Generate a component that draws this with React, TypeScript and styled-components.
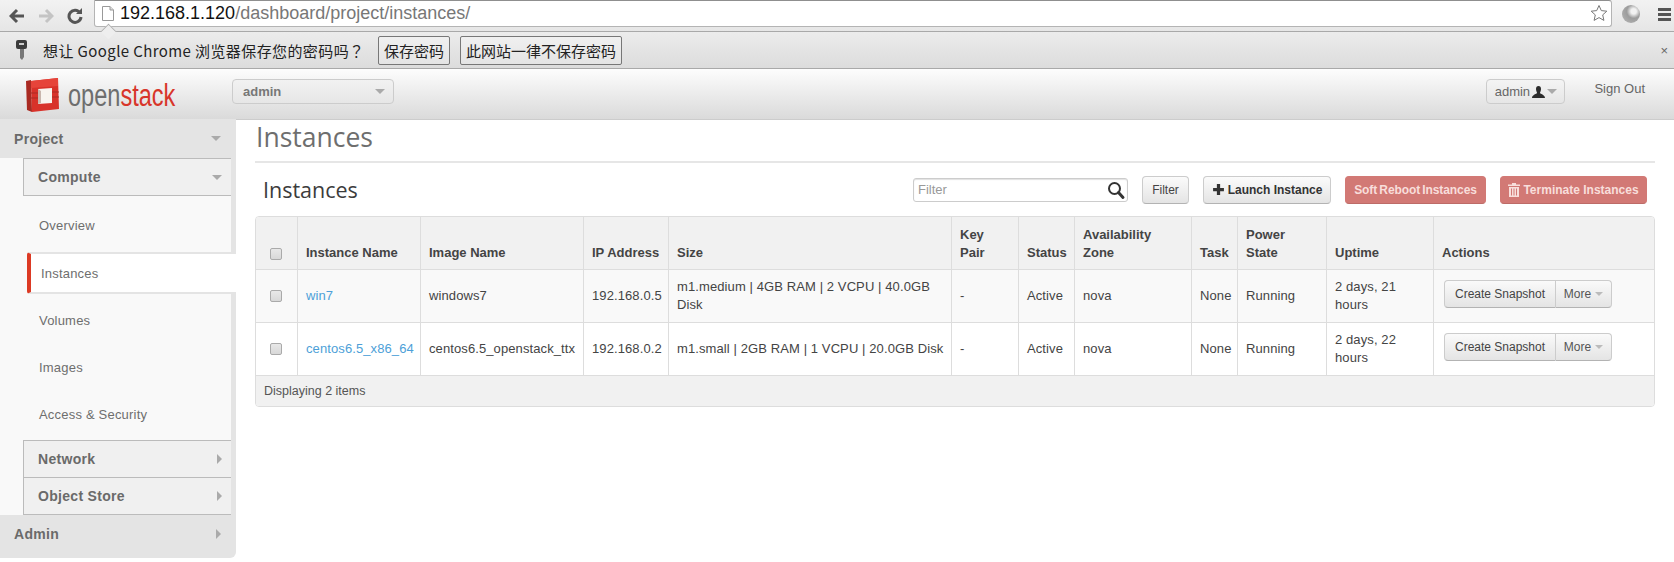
import { createGlobalStyle, styled } from "styled-components";

const GlobalStyle = createGlobalStyle`
  html, body {
    margin: 0;
    padding: 0;
    background: #fff;
    overflow: hidden;
  }
  * { box-sizing: border-box; }
  body {
    font-family: "Liberation Sans", Arial, sans-serif;
    font-size: 13px;
    color: #333;
  }
`;

const Page = styled.div`
  width: 1674px;
  height: 562px;
  display: flex;
  flex-direction: column;
  overflow: hidden;
`;

/* browser chrome */
const Toolbar = styled.div`
  height: 32px;
  flex: none;
  display: flex;
  align-items: center;
  padding-right: 3px;
  background: linear-gradient(#f2f2f2, #e6e6e6);
  border-bottom: 1px solid #a9a9a9;
`;

const NavIcon = styled.svg<{ $gap: number }>`
  width: 16px;
  height: 16px;
  flex: none;
  margin-left: ${(p) => p.$gap}px;
`;

const Omnibox = styled.div`
  margin-left: 11px;
  flex: 1;
  height: 27px;
  margin-top: -5px;
  background: #fff;
  border: 1px solid #b4b4b4;
  border-top-color: #8f8f8f;
  border-radius: 0 3px 3px 3px;
  display: flex;
  align-items: center;
  padding: 0 3px 0 7px;
  font-size: 18px;
  color: #777;
  b {
    font-weight: normal;
    color: #111;
  }
`;

const PageIcon = styled.svg`
  width: 12px;
  height: 15px;
  margin-right: 6px;
  flex: none;
`;

const UrlText = styled.span`
  flex: 1;
`;

const Globe = styled.div`
  width: 18px;
  height: 18px;
  margin-left: 10px;
  margin-top: -3px;
  border-radius: 50%;
  background: radial-gradient(circle at 65% 35%, #f2f2f2 0 16%, #9c9c9c 42%, #b8b8b8 100%);
  flex: none;
`;

const Hamburger = styled.div`
  width: 13px;
  height: 13px;
  margin-left: 18px;
  margin-top: -3px;
  flex: none;
  background: repeating-linear-gradient(#555 0 3px, transparent 3px 5px);
`;

const InfoBar = styled.div`
  height: 37px;
  flex: none;
  display: flex;
  align-items: center;
  padding: 0 6px 0 15px;
  background: linear-gradient(#ececec, #dcdcdc);
  border-bottom: 1px solid #a9a9a9;
  font-family: "Noto Sans CJK SC", "Liberation Sans", sans-serif;
  font-size: 15px;
  color: #222;
  position: relative;

  &::before {
    content: "";
    position: absolute;
    left: 102px;
    top: -7px;
    width: 12px;
    height: 12px;
    background: #eee;
    border-left: 1px solid #a9a9a9;
    border-top: 1px solid #a9a9a9;
    transform: rotate(45deg) scale(0.85);
  }
`;

const KeyIcon = styled.svg`
  width: 13px;
  height: 20px;
  flex: none;
  margin-right: 15px;
`;

const InfoText = styled.span`
  width: 335px;
  flex: none;
  font-family: "Noto Sans CJK TC", "Noto Sans CJK SC", "Liberation Sans", sans-serif;
  letter-spacing: 0.4px;
  white-space: nowrap;
`;

const InfoButton = styled.button`
  height: 29px;
  padding: 0 5px;
  margin-right: 10px;
  font: inherit;
  color: #222;
  background: linear-gradient(#f0f0f0, #e4e4e4);
  border: 1px solid #777;
  border-radius: 2px;
`;

const CloseMark = styled.span`
  margin-left: auto;
  font-family: "Liberation Sans", sans-serif;
  font-size: 13px;
  color: #666;
`;

/* dashboard header */
const Header = styled.header`
  height: 51px;
  flex: none;
  display: flex;
  background: linear-gradient(#fdfdfd, #dadada);
  border-bottom: 1px solid #ccc;
`;

const Brand = styled.div`
  width: 232px;
  display: flex;
  align-items: center;
  padding: 3px 0 0 26px;
`;

const Wordmark = styled.div`
  font-family: "Liberation Sans", sans-serif;
  font-size: 31px;
  white-space: nowrap;
  transform: scaleX(0.76);
  transform-origin: left center;
  span { color: #6e6e6e; }
  em { font-style: normal; color: #d8352a; }
`;

const LogoMark = styled.svg`
  width: 33px;
  height: 35px;
  margin-right: 9px;
  flex: none;
`;

const TenantSelect = styled.div`
  width: 162px;
  height: 25px;
  margin-top: 10px;
  display: flex;
  align-items: center;
  justify-content: space-between;
  padding: 0 8px 0 10px;
  border: 1px solid #ccc;
  border-radius: 4px;
  background: linear-gradient(#f2f2f2, #e6e6e6);
  font-size: 13px;
  font-weight: bold;
  color: #777;
`;

const Caret = styled.i<{ $size?: number; $color?: string }>`
  display: inline-block;
  width: 0;
  height: 0;
  border-left: ${(p) => p.$size ?? 5}px solid transparent;
  border-right: ${(p) => p.$size ?? 5}px solid transparent;
  border-top: ${(p) => p.$size ?? 5}px solid ${(p) => p.$color ?? "#aaa"};
`;

const SideCaret = styled.i`
  display: inline-block;
  width: 0;
  height: 0;
  border-top: 5px solid transparent;
  border-bottom: 5px solid transparent;
  border-left: 5px solid #aaa;
`;

const HeaderRight = styled.div`
  margin-left: auto;
  display: flex;
  align-items: flex-start;
  padding-right: 29px;
`;

const UserButton = styled.div`
  width: 79px;
  height: 25px;
  margin-top: 10px;
  display: flex;
  align-items: center;
  justify-content: center;
  gap: 2px;
  border: 1px solid #ccc;
  border-radius: 4px;
  background: linear-gradient(#f4f4f4, #e6e6e6);
  color: #666;
  font-size: 13px;
`;

const SignOut = styled.a`
  margin: 12px 0 0 29px;
  font-size: 13px;
  color: #666;
`;

/* body */
const Body = styled.div`
  flex: 1;
  display: flex;
  min-height: 0;
`;

const Sidebar = styled.nav`
  width: 236px;
  height: 439px;
  flex: none;
  background: #e4e4e4;
  border-radius: 0 0 6px 0;
  display: flex;
  flex-direction: column;
  margin-top: -1px;
`;

const PanelHead = styled.div<{ $h: number; $pb?: number }>`
  height: ${(p) => p.$h}px;
  flex: none;
  display: flex;
  align-items: center;
  justify-content: space-between;
  padding: 0 15px ${(p) => p.$pb ?? 0}px 14px;
  font-size: 14px;
  letter-spacing: 0.3px;
  font-weight: bold;
  color: #6a6a6a;
`;

const SidePanel = styled.div`
  flex: 1;
  width: 231px;
  background: #f9f9f9;
  padding-left: 23px;
  display: flex;
  flex-direction: column;
`;

const DashHead = styled.div<{ $h: number; $top?: boolean }>`
  height: ${(p) => p.$h}px;
  flex: none;
  display: flex;
  align-items: center;
  justify-content: space-between;
  padding: 0 9px 0 14px;
  font-size: 14px;
  letter-spacing: 0.3px;
  font-weight: bold;
  color: #6a6a6a;
  background: #f0f0f0;
  border-left: 1px solid #bbb;
  border-top: ${(p) => (p.$top ? "1px solid #bbb" : "0")};
  border-bottom: 1px solid #bbb;
`;

const NavLink = styled.div<{ $h: number; $pt?: number }>`
  height: ${(p) => p.$h}px;
  flex: none;
  display: flex;
  align-items: center;
  padding: ${(p) => p.$pt ?? 0}px 0 0 16px;
  font-size: 13px;
  letter-spacing: 0.2px;
  color: #6e6e6e;
`;

const ActiveLink = styled.div`
  height: 42px;
  width: 209px;
  flex: none;
  margin-left: 4px;
  display: flex;
  align-items: center;
  padding-left: 10px;
  font-size: 13px;
  letter-spacing: 0.2px;
  color: #6e6e6e;
  background: #fff;
  border-left: 4px solid #dc3a24;
  border-top: 2px solid #e4e4e4;
  border-bottom: 2px solid #e4e4e4;
  border-radius: 3px 0 0 3px;
`;

const Main = styled.main`
  flex: 1;
  min-width: 0;
  padding: 0 19px;
`;

const Title = styled.div`
  height: 43px;
  padding-left: 1px;
  border-bottom: 2px solid #e6e6e6;
  font-family: "Open Sans", "Liberation Sans", sans-serif;
  font-size: 26.5px;
  line-height: 34px;
  color: #6e6e6e;
`;

const TableBar = styled.div`
  height: 53px;
  display: flex;
  align-items: center;
  padding: 0 8px;
`;

const TableTitle = styled.div`
  font-family: "Open Sans", "Liberation Sans", sans-serif;
  font-size: 21.5px;
  color: #3c3c3c;
  margin: -1px auto 0 0;
`;

const FilterBox = styled.div`
  width: 215px;
  height: 24px;
  display: flex;
  align-items: center;
  justify-content: space-between;
  padding: 0 1px 0 4px;
  border: 1px solid #ccc;
  border-radius: 3px;
  color: #999;
  font-size: 13px;
  box-shadow: inset 0 1px 1px rgba(0, 0, 0, 0.12);
`;

const BarButton = styled.button<{ $w: number; $danger?: boolean }>`
  width: ${(p) => p.$w}px;
  height: 28px;
  margin-left: 14px;
  padding: 0;
  display: flex;
  align-items: center;
  justify-content: center;
  gap: 3px;
  font-family: inherit;
  font-size: 12px;
  font-weight: bold;
  color: ${(p) => (p.$danger ? "#f8dedb" : "#333")};
  background: ${(p) => (p.$danger ? "#d27975" : "linear-gradient(#fbfbfb, #e4e4e4)")};
  border: 1px solid ${(p) => (p.$danger ? "#d27975" : "#ccc")};
  border-bottom-color: ${(p) => (p.$danger ? "#bd6b67" : "#b3b3b3")};
  border-radius: 4px;
`;

const FilterButton = styled(BarButton)`
  font-weight: normal;
  color: #444;
`;

const RebootButton = styled(BarButton)`
  word-spacing: -1px;
  letter-spacing: -0.1px;
`;

const Table = styled.table`
  width: 100%;
  border-collapse: separate;
  border-spacing: 0;
  table-layout: fixed;
  font-size: 13px;
  line-height: 18px;
  border: 1px solid #ddd;
  border-radius: 4px;
  overflow: hidden;
`;

const Th = styled.th`
  height: 52px;
  padding: 8px 8px 7px;
  background: #f1f1f1;
  text-align: left;
  vertical-align: bottom;
  color: #444;
  font-size: 13px;
  font-weight: bold;
  border-left: 1px solid #ddd;
  &:first-child { border-left: 0; }
`;

const Td = styled.td<{ $odd: boolean }>`
  height: 53px;
  padding: 0 6px 0 8px;
  background: ${(p) => (p.$odd ? "#f9f9f9" : "#fff")};
  border-left: 1px solid #ddd;
  border-top: 1px solid #ddd;
  vertical-align: middle;
  color: #444;
  letter-spacing: 0.1px;
  &:first-child { border-left: 0; }
`;

const FooterCell = styled.td`
  height: 31px;
  padding: 0 8px;
  background: #f1f1f1;
  border-top: 1px solid #ddd;
  color: #555;
  font-size: 12.5px;
`;

const Check = styled.span`
  display: block;
  width: 12px;
  height: 12px;
  margin-left: 6px;
  border: 1px solid #aaa;
  border-radius: 2px;
  background: linear-gradient(#e8e8e8, #d8d8d8);
`;

const HeadCheck = styled(Check)`
  margin-bottom: 2px;
`;

const InstanceLink = styled.a`
  color: #4d9fd8;
`;

const ActionGroup = styled.div`
  display: flex;
  height: 28px;
  width: 168px;
  margin: -4px 0 0 2px;
`;

const SnapshotButton = styled.button`
  width: 112px;
  font-family: inherit;
  font-size: 12px;
  color: #444;
  background: linear-gradient(#fafafa, #e4e4e4);
  border: 1px solid #ccc;
  border-bottom-color: #b3b3b3;
  border-radius: 4px 0 0 4px;
  padding: 0;
`;

const MoreButton = styled.button`
  flex: 1;
  display: flex;
  align-items: center;
  justify-content: center;
  gap: 4px;
  font-family: inherit;
  font-size: 12px;
  color: #555;
  background: linear-gradient(#fafafa, #e4e4e4);
  border: 1px solid #ccc;
  border-left: 0;
  border-bottom-color: #b3b3b3;
  border-radius: 0 4px 4px 0;
  padding: 0;
`;

const Logo = () => (
  <LogoMark viewBox="0 0 33 35">
    <path d="M0 3 L5 2 L6 34 L1 32 Z" fill="#a92a22" />
    <path d="M5 3 L32 0 L33 31 L6 34 Z" fill="#d8322a" />
    <path d="M5 3 L32 0 L32 8 L5 10 Z" fill="#e6443a" />
    <path d="M12 11 L26 10 L26 25 L12 26 Z" fill="#f8f4ee" />
    <path d="M12 11 L15 13 L15 25 L12 26 Z" fill="#c9b6ac" />
    <path d="M1 15 H12 M26 14 H33 M1 20 H12 M26 19 H33" stroke="#a92a22" strokeWidth="1" fill="none" />
  </LogoMark>
);

const Search = () => (
  <svg width="20" height="20" viewBox="0 0 20 20">
    <circle cx="8.5" cy="8.5" r="5.5" fill="none" stroke="#333" strokeWidth="2" />
    <path d="M12.5 12.5 L17 17.5" stroke="#333" strokeWidth="3" strokeLinecap="round" />
  </svg>
);

const Plus = () => (
  <svg width="13" height="13" viewBox="0 0 12 12">
    <path d="M4.5 1h3v3.500h3.500v3h-3.500v3.500h-3v-3.500h-3.500v-3h3.500z" fill="#333" />
  </svg>
);

const Trash = () => (
  <svg width="12" height="14" viewBox="0 0 12 14">
    <path d="M4 0h4v1.500h4v1.500h-12v-1.500h4zM1 4h10v10h-10zM3 5.500v7h1v-7zM5.500 5.500v7h1v-7zM8 5.500v7h1v-7z" fill="#f8dedb" fillRule="evenodd" />
  </svg>
);

const UserGlyph = () => (
  <svg width="13" height="12" viewBox="0 0 13 12">
    <path d="M4 3a2.500 3 0 0 1 5 0c0 2-1 3-1 4 0 1 5 1.500 5 5h-13c0-3.500 5-4 5-5 0-1-1-2-1-4z" fill="#2c2c2c" />
  </svg>
);

type Row = {
  name: string;
  image: string;
  ip: string;
  size: string;
  uptime: string;
};

const rows: Row[] = [
  {
    name: "win7",
    image: "windows7",
    ip: "192.168.0.5",
    size: "m1.medium | 4GB RAM | 2 VCPU | 40.0GB Disk",
    uptime: "2 days, 21 hours",
  },
  {
    name: "centos6.5_x86_64",
    image: "centos6.5_openstack_ttx",
    ip: "192.168.0.2",
    size: "m1.small | 2GB RAM | 1 VCPU | 20.0GB Disk",
    uptime: "2 days, 22 hours",
  },
];

const columnWidths = [41, 123, 163, 85, 283, 67, 56, 117, 46, 89, 107, 0];

export default function App() {
  return (
    <Page>
      <GlobalStyle />
      <Toolbar>
        <NavIcon $gap={9} viewBox="0 0 16 16">
          <path d="M8 2 L2 8 L8 14 M2.500 8 H15" fill="none" stroke="#555" strokeWidth="3" />
        </NavIcon>
        <NavIcon $gap={13} viewBox="0 0 16 16">
          <path d="M8 2 L14 8 L8 14 M13.500 8 H1" fill="none" stroke="#c4c4c4" strokeWidth="3" />
        </NavIcon>
        <NavIcon $gap={13} viewBox="0 0 16 16">
          <path d="M13 5 A6 6 0 1 0 14 9" fill="none" stroke="#555" strokeWidth="3" />
          <path d="M9 6 H15 V0 Z" fill="#555" />
        </NavIcon>
        <Omnibox>
          <PageIcon viewBox="0 0 12 15">
            <path d="M.500 .500 H8 L11.500 4 V14.500 H.500 Z" fill="#fff" stroke="#999" />
            <path d="M8 .500 V4 H11.500" fill="#ddd" stroke="#999" />
          </PageIcon>
          <UrlText>
            <b>192.168.1.120</b>/dashboard/project/instances/
          </UrlText>
          <svg width="18" height="18" viewBox="0 0 18 18">
            <path d="M9 1.500 L11.300 6.600 L16.800 7.200 L12.700 10.900 L13.900 16.400 L9 13.600 L4.100 16.400 L5.300 10.900 L1.200 7.200 L6.700 6.600 Z" fill="#fff" stroke="#777" />
          </svg>
        </Omnibox>
        <Globe />
        <Hamburger />
      </Toolbar>
      <InfoBar>
        <KeyIcon viewBox="0 0 13 20">
          <path d="M5 8 H9 V17 L7 20 L5 18 Z" fill="#777" />
          <rect x="1" y="0" width="11" height="9" rx="2" fill="#3c3c3c" />
          <rect x="4" y="3" width="5" height="2" fill="#ccc" />
        </KeyIcon>
        <InfoText>想让 Google Chrome 浏览器保存您的密码吗？</InfoText>
        <InfoButton>保存密码</InfoButton>
        <InfoButton>此网站一律不保存密码</InfoButton>
        <CloseMark>×</CloseMark>
      </InfoBar>
      <Header>
        <Brand>
          <Logo />
          <Wordmark>
            <span>open</span>
            <em>stack</em>
          </Wordmark>
        </Brand>
        <TenantSelect>
          admin
          <Caret />
        </TenantSelect>
        <HeaderRight>
          <UserButton>
            admin
            <UserGlyph />
            <Caret />
          </UserButton>
          <SignOut>Sign Out</SignOut>
        </HeaderRight>
      </Header>
      <Body>
        <Sidebar>
          <PanelHead $h={39}>
            Project
            <Caret />
          </PanelHead>
          <SidePanel>
            <DashHead $h={38} $top>
              Compute
              <Caret />
            </DashHead>
            <NavLink $h={56} $pt={2}>Overview</NavLink>
            <ActiveLink>Instances</ActiveLink>
            <NavLink $h={52}>Volumes</NavLink>
            <NavLink $h={42}>Images</NavLink>
            <NavLink $h={52}>Access &amp; Security</NavLink>
            <DashHead $h={38} $top>
              Network
              <SideCaret />
            </DashHead>
            <DashHead $h={37}>
              Object Store
              <SideCaret />
            </DashHead>
          </SidePanel>
          <PanelHead $h={43} $pb={5}>
            Admin
            <SideCaret />
          </PanelHead>
        </Sidebar>
        <Main>
          <Title>Instances</Title>
          <TableBar>
            <TableTitle>Instances</TableTitle>
            <FilterBox>
              Filter
              <Search />
            </FilterBox>
            <FilterButton $w={47}>Filter</FilterButton>
            <BarButton $w={128}>
              <Plus />
              Launch Instance
            </BarButton>
            <RebootButton $w={141} $danger>
              Soft Reboot Instances
            </RebootButton>
            <BarButton $w={147} $danger>
              <Trash />
              Terminate Instances
            </BarButton>
          </TableBar>
          <Table>
            <colgroup>
              {columnWidths.map((w, i) => (
                <col key={i} style={w ? { width: w } : undefined} />
              ))}
            </colgroup>
            <thead>
              <tr>
                <Th><HeadCheck /></Th>
                <Th>Instance Name</Th>
                <Th>Image Name</Th>
                <Th>IP Address</Th>
                <Th>Size</Th>
                <Th>Key Pair</Th>
                <Th>Status</Th>
                <Th>Availability Zone</Th>
                <Th>Task</Th>
                <Th>Power State</Th>
                <Th>Uptime</Th>
                <Th>Actions</Th>
              </tr>
            </thead>
            <tbody>
              {rows.map((row, i) => (
                <tr key={row.name}>
                  <Td $odd={i === 0}><Check /></Td>
                  <Td $odd={i === 0}><InstanceLink>{row.name}</InstanceLink></Td>
                  <Td $odd={i === 0}>{row.image}</Td>
                  <Td $odd={i === 0}>{row.ip}</Td>
                  <Td $odd={i === 0}>{row.size}</Td>
                  <Td $odd={i === 0}>-</Td>
                  <Td $odd={i === 0}>Active</Td>
                  <Td $odd={i === 0}>nova</Td>
                  <Td $odd={i === 0}>None</Td>
                  <Td $odd={i === 0}>Running</Td>
                  <Td $odd={i === 0}>{row.uptime}</Td>
                  <Td $odd={i === 0}>
                    <ActionGroup>
                      <SnapshotButton>Create Snapshot</SnapshotButton>
                      <MoreButton>
                        More
                        <Caret $size={4} $color="#bbb" />
                      </MoreButton>
                    </ActionGroup>
                  </Td>
                </tr>
              ))}
            </tbody>
            <tfoot>
              <tr>
                <FooterCell colSpan={12}>Displaying 2 items</FooterCell>
              </tr>
            </tfoot>
          </Table>
        </Main>
      </Body>
    </Page>
  );
}
